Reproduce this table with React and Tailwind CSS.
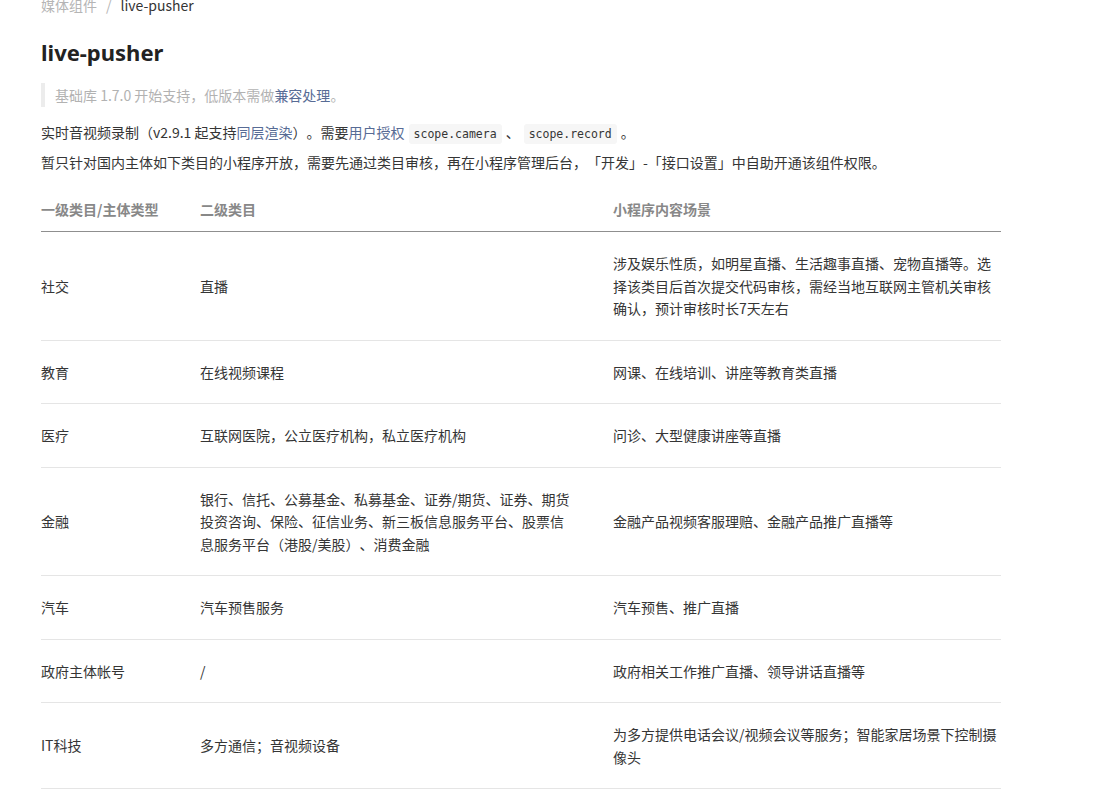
const rows = [
  {
    first: "社交",
    second: ["直播"],
    scene: "涉及娱乐性质，如明星直播、生活趣事直播、宠物直播等。选择该类目后首次提交代码审核，需经当地互联网主管机关审核确认，预计审核时长7天左右",
  },
  { first: "教育", second: ["在线视频课程"], scene: "网课、在线培训、讲座等教育类直播" },
  { first: "医疗", second: ["互联网医院，公立医疗机构，私立医疗机构"], scene: "问诊、大型健康讲座等直播" },
  {
    first: "金融",
    second: ["银行、信托、公募基金、私募基金、证券/期货、证券、期货投资咨询、保险、征信业务、新三板信息服务平台、股票信息服务平台（港股/美股）、消费金融"],
    scene: "金融产品视频客服理赔、金融产品推广直播等",
  },
  { first: "汽车", second: ["汽车预售服务"], scene: "汽车预售、推广直播" },
  { first: "政府主体帐号", second: ["/"], scene: "政府相关工作推广直播、领导讲话直播等" },
  {
    first: "IT科技",
    second: ["多方通信；音视频设备"],
    scene: "为多方提供电话会议/视频会议等服务；智能家居场景下控制摄像头",
  },
];

function Code({ children }) {
  return (
    <code className="mx-[4px] rounded-[3px] bg-[#f6f6f6] px-[5px] py-[3px] font-['DejaVu_Sans_Mono',monospace] text-[11.5px] text-[#353535]">
      {children}
    </code>
  );
}

export default function App() {
  return (
    <div className="min-h-screen bg-white font-['Noto_Sans_CJK_SC','Noto_Sans',sans-serif] text-[14px] text-[#353535] [text-spacing-trim:space-all]">
      <div className="-mt-[6px] pl-[41px]">
        <div className="flex items-center leading-[22px]">
          <span className="text-[#b5b5b5]">媒体组件</span>
          <span className="mx-[9px] text-[#b5b5b5]">/</span>
          <span className="text-[#353535]">live-pusher</span>
        </div>

        <h1 className="mt-[21px] font-['Noto_Sans',sans-serif] text-[22px] font-bold leading-[30px] text-[#222]">live-pusher</h1>

        <div className="mt-[16px] border-l-[4px] border-[#ececec] pl-[10px] leading-[24px] text-[#b2b2b2]">
          基础库 1.7.0 开始支持，低版本需做<span className="text-[#576b95]">兼容处理</span>。
        </div>

        <p className="mt-[13px] leading-[24px]">
          实时音视频录制（v2.9.1 起支持<span className="text-[#576b95]">同层渲染</span>）。需要
          <span className="text-[#576b95]">用户授权</span>
          <Code>scope.camera</Code>、<Code>scope.record</Code>。
        </p>
        <p className="mt-[4px] leading-[24px]">
          暂只针对国内主体如下类目的小程序开放，需要先通过类目审核，再在小程序管理后台，「开发」-「接口设置」中自助开通该组件权限。
        </p>

        <table className="mt-[14px] w-[960px] table-fixed border-collapse text-left">
          <colgroup>
            <col className="w-[159px]" />
            <col className="w-[413px]" />
            <col className="w-[388px]" />
          </colgroup>
          <thead>
            <tr className="border-b border-[#8f8f8f]">
              <th className="pt-[10px] pb-[11px] font-bold leading-[22px] text-[#888]">一级类目/主体类型</th>
              <th className="pt-[10px] pb-[11px] font-bold leading-[22px] text-[#888]">二级类目</th>
              <th className="pt-[10px] pb-[11px] font-bold leading-[22px] text-[#888]">小程序内容场景</th>
            </tr>
          </thead>
          <tbody>
            {rows.map((r) => (
              <tr key={r.first} className="border-b border-[#e5e5e5]">
                <td className="py-[20px] pr-[10px] align-middle leading-[22.5px]">{r.first}</td>
                <td className="py-[20px] pr-[36px] align-middle leading-[22.5px]">{r.second}</td>
                <td className="py-[20px] align-middle leading-[22.5px]">{r.scene}</td>
              </tr>
            ))}
          </tbody>
        </table>
      </div>
    </div>
  );
}
